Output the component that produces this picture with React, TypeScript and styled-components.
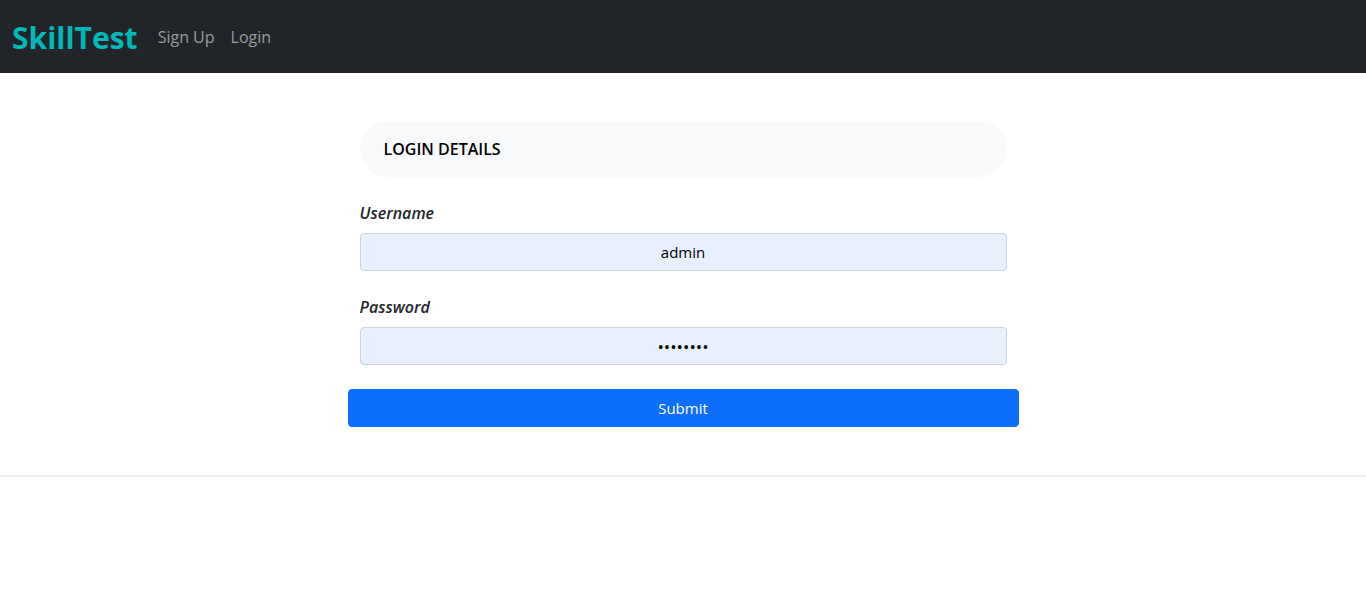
import React from "react";
import styled, { createGlobalStyle } from "styled-components";

const Global = createGlobalStyle`
  *, *::before, *::after { box-sizing: border-box; }
  body {
    margin: 0;
    background: #fff;
    color: #212529;
    font: 400 16px/24px "Segoe UI", "Open Sans", "Noto Sans", sans-serif;
  }
`;

const Navbar = styled.nav`
  display: flex;
  align-items: center;
  gap: 12px;
  padding: 8px 12px;
  background: #212529;
`;

const Brand = styled.a`
  padding: 6px 0 3px;
  color: #00b8b8;
  font-size: 30px;
  font-weight: 700;
  line-height: 48px;
  text-decoration: none;
`;

const NavLinks = styled.div`
  display: flex;
`;

const NavLink = styled.a`
  padding: 8px;
  color: rgba(255, 255, 255, 0.55);
  text-decoration: none;
`;

const Section = styled.main`
  display: flex;
  justify-content: center;
  padding: 48px 12px;
  border-bottom: 2px solid #f0f0f0;
  box-shadow: 0 1px 3px rgba(0, 0, 0, 0.06);
`;

const LoginForm = styled.form`
  display: flex;
  flex-direction: column;
  gap: 24px;
  width: 100%;
  max-width: 671px;
`;

const Heading = styled.h1`
  margin: 0 12px;
  padding: 16px 24px;
  border-radius: 28px;
  background: #f8f9fa;
  color: #000;
  font-size: 16px;
  font-weight: 600;
  line-height: 24px;
`;

const Field = styled.div`
  display: flex;
  flex-direction: column;
  gap: 8px;
  margin: 0 12px;
`;

const Label = styled.label`
  font-weight: 600;
  font-style: italic;
`;

const Input = styled.input`
  width: 100%;
  height: 38px;
  padding: 6px 12px;
  border: 1px solid #ced4da;
  border-radius: 4px;
  background: #e8f0fe;
  color: #000;
  font: inherit;
  font-size: 15px;
  text-align: center;

  &[type="password"] {
    font-size: 17px;
  }
`;

const SubmitButton = styled.button`
  height: 38px;
  padding: 6px 12px;
  border: 1px solid #0d6efd;
  border-radius: 4px;
  background: #0d6efd;
  color: #fff;
  font: inherit;
  font-size: 15px;
`;

export default function App() {
  return (
    <>
      <Global />
      <Navbar>
        <Brand href="#">SkillTest</Brand>
        <NavLinks>
          <NavLink href="#signup">Sign Up</NavLink>
          <NavLink href="#login">Login</NavLink>
        </NavLinks>
      </Navbar>
      <Section>
        <LoginForm onSubmit={(event) => event.preventDefault()}>
          <Heading>LOGIN DETAILS</Heading>
          <Field>
            <Label htmlFor="username">Username</Label>
            <Input id="username" type="text" defaultValue="admin" />
          </Field>
          <Field>
            <Label htmlFor="password">Password</Label>
            <Input id="password" type="password" defaultValue="password" />
          </Field>
          <SubmitButton type="submit">Submit</SubmitButton>
        </LoginForm>
      </Section>
    </>
  );
}
